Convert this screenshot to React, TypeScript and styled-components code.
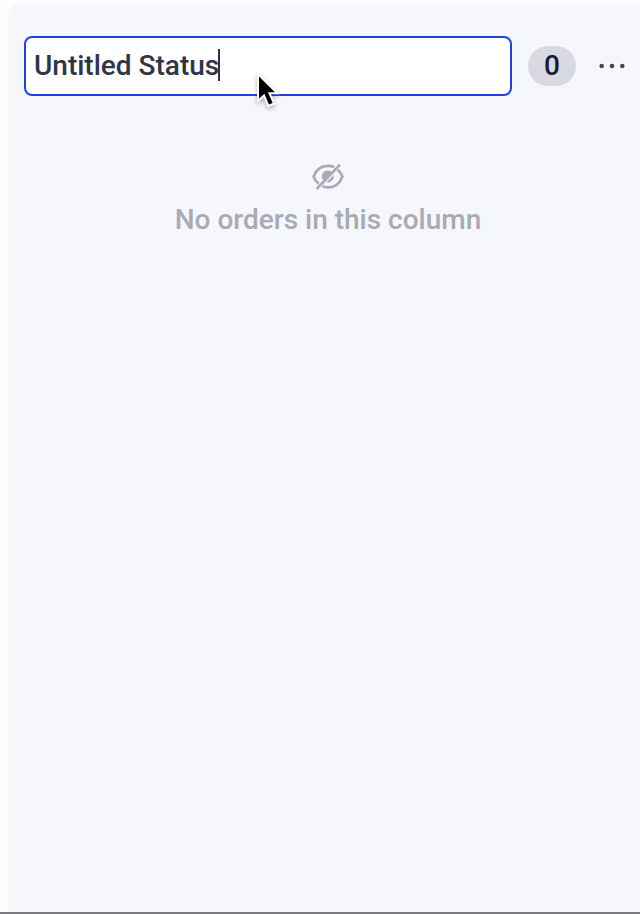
import React, { useState } from "react";
import styled, { createGlobalStyle } from "styled-components";

const GlobalStyle = createGlobalStyle`
  *, *::before, *::after { box-sizing: border-box; }
  body {
    margin: 0;
    background: #fdfdfe;
    font-family: Roboto, "Liberation Sans", sans-serif;
    font-size: 28px;
    font-weight: 500;
    line-height: 32px;
  }
`;

const Board = styled.main`
  display: flex;
  min-height: 100vh;
  padding: 4px 0 0 8px;
  border-bottom: 2px solid #7b797d;
`;

const Column = styled.section`
  flex: 1;
  min-width: 0;
  padding: 32px 8px 32px 16px;
  border-top-left-radius: 12px;
  background: #f5f7fb;
`;

const ColumnHeader = styled.header`
  display: flex;
  align-items: center;
  gap: 16px;
`;

const NameField = styled.div`
  position: relative;
  flex: 1;
  min-width: 0;
`;

const NameInput = styled.input`
  display: block;
  width: 100%;
  height: 60px;
  padding: 0 8px 2px;
  border: 2px solid #1d42e8;
  border-radius: 8px;
  outline: none;
  background: #fff;
  color: #2f3447;
  caret-color: transparent;
  font: inherit;
`;

const Caret = styled.span`
  position: absolute;
  top: 13px;
  left: 194px;
  width: 2px;
  height: 32px;
  background: #2b3046;
`;

const Pointer = styled.svg`
  position: absolute;
  top: 36px;
  left: 230px;
  overflow: visible;
  filter: drop-shadow(0 2px 2px rgba(0, 0, 0, 0.3));
  pointer-events: none;
`;

const CountBadge = styled.span`
  display: flex;
  align-items: center;
  justify-content: center;
  width: 48px;
  height: 40px;
  border-radius: 20px;
  background: #d9d9e4;
  color: #1c1c2e;
`;

const MenuButton = styled.button`
  display: flex;
  align-items: center;
  justify-content: center;
  width: 40px;
  height: 40px;
  padding: 0;
  border: 0;
  background: transparent;
  color: #45465a;
  cursor: pointer;
`;

const EmptyState = styled.div`
  display: flex;
  flex-direction: column;
  align-items: center;
  gap: 12px;
  padding-top: 64px;
  color: #a9a9b8;
  text-align: center;
`;

const EmptyText = styled.p`
  margin: 0;
`;

function HiddenIcon() {
  return (
    <svg width="32" height="32" viewBox="0 0 32 32" fill="none" stroke="currentColor" strokeWidth="2.8" aria-hidden="true">
      <path d="M22.2 6.9C20.2 6.2 18.1 5.9 16 5.9C8.8 5.9 3.8 10.5 1.6 16.6C2.6 19.4 4.2 21.7 6.6 23.7" />
      <path d="M25.7 9.7C27.9 11.6 29.4 13.9 30.4 16.6C28.2 22.7 23.2 27.3 16 27.3C14.1 27.3 12.2 27 10.5 26.3" />
      <path d="M20 12.4A5.8 5.8 0 0 0 11.2 20.2ZM21.6 15L14.6 22.2A5.8 5.8 0 0 0 21.6 15Z" fill="currentColor" stroke="none" />
      <path d="M4.6 29L28 4.6" />
    </svg>
  );
}

export default function App() {
  const [name, setName] = useState("Untitled Status");

  return (
    <>
      <GlobalStyle />
      <Board>
        <Column aria-label={name}>
          <ColumnHeader>
            <NameField>
              <NameInput
                type="text"
                aria-label="Status name"
                value={name}
                onChange={(event) => setName(event.target.value)}
              />
              <Caret aria-hidden="true" />
              <Pointer width="26" height="36" viewBox="0 0 26 36" aria-hidden="true">
                <path
                  d="M4 2V29L10 23.4L14.4 34L20 31.4L15.4 21.2H23.4Z"
                  fill="#000"
                  stroke="#fff"
                  strokeWidth="2"
                />
              </Pointer>
            </NameField>
            <CountBadge>0</CountBadge>
            <MenuButton type="button" aria-label="Column options">
              <svg width="28" height="8" viewBox="0 0 28 8" fill="currentColor" aria-hidden="true">
                <circle cx="3.7" cy="4" r="2.3" />
                <circle cx="14" cy="4" r="2.3" />
                <circle cx="24.3" cy="4" r="2.3" />
              </svg>
            </MenuButton>
          </ColumnHeader>
          <EmptyState>
            <HiddenIcon />
            <EmptyText>No orders in this column</EmptyText>
          </EmptyState>
        </Column>
      </Board>
    </>
  );
}
